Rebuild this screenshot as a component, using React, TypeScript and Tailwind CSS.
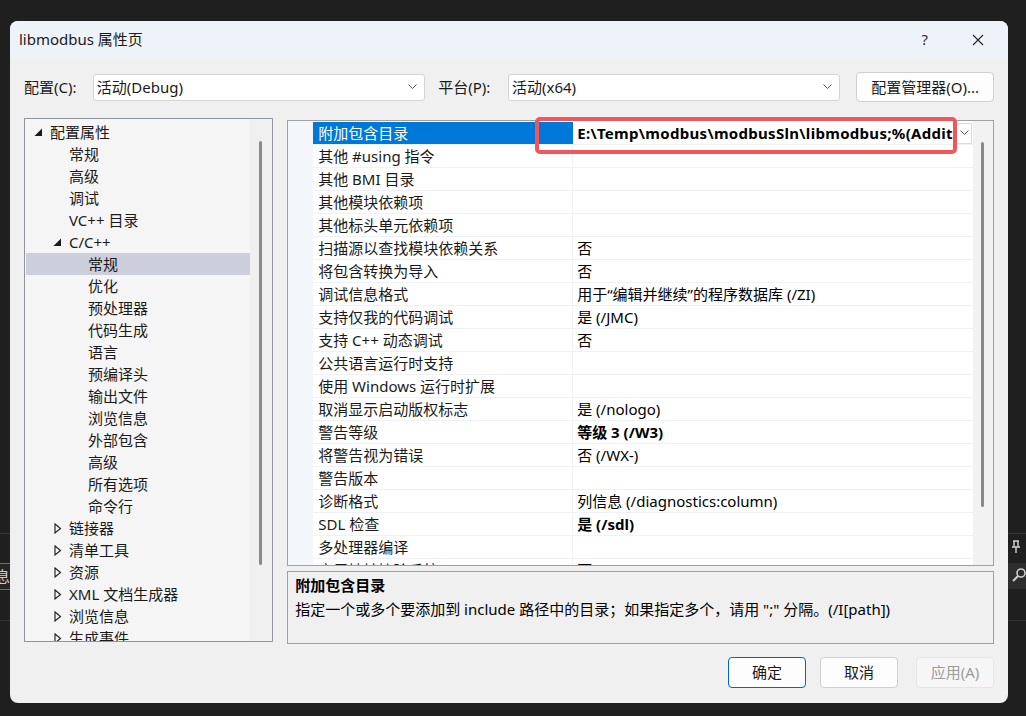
import React from "react";

type TreeItem = { label: string; level: number; arrow?: "open" | "closed"; selected?: boolean };

const tree: TreeItem[] = [
  { label: "配置属性", level: 0, arrow: "open" },
  { label: "常规", level: 1 },
  { label: "高级", level: 1 },
  { label: "调试", level: 1 },
  { label: "VC++ 目录", level: 1 },
  { label: "C/C++", level: 1, arrow: "open" },
  { label: "常规", level: 2, selected: true },
  { label: "优化", level: 2 },
  { label: "预处理器", level: 2 },
  { label: "代码生成", level: 2 },
  { label: "语言", level: 2 },
  { label: "预编译头", level: 2 },
  { label: "输出文件", level: 2 },
  { label: "浏览信息", level: 2 },
  { label: "外部包含", level: 2 },
  { label: "高级", level: 2 },
  { label: "所有选项", level: 2 },
  { label: "命令行", level: 2 },
  { label: "链接器", level: 1, arrow: "closed" },
  { label: "清单工具", level: 1, arrow: "closed" },
  { label: "资源", level: 1, arrow: "closed" },
  { label: "XML 文档生成器", level: 1, arrow: "closed" },
  { label: "浏览信息", level: 1, arrow: "closed" },
  { label: "生成事件", level: 1, arrow: "closed" },
];

const props: { name: string; value?: string; bold?: boolean }[] = [
  { name: "附加包含目录" },
  { name: "其他 #using 指令" },
  { name: "其他 BMI 目录" },
  { name: "其他模块依赖项" },
  { name: "其他标头单元依赖项" },
  { name: "扫描源以查找模块依赖关系", value: "否" },
  { name: "将包含转换为导入", value: "否" },
  { name: "调试信息格式", value: "用于“编辑并继续”的程序数据库 (/ZI)" },
  { name: "支持仅我的代码调试", value: "是 (/JMC)" },
  { name: "支持 C++ 动态调试", value: "否" },
  { name: "公共语言运行时支持" },
  { name: "使用 Windows 运行时扩展" },
  { name: "取消显示启动版权标志", value: "是 (/nologo)" },
  { name: "警告等级", value: "等级 3 (/W3)", bold: true },
  { name: "将警告视为错误", value: "否 (/WX-)" },
  { name: "警告版本" },
  { name: "诊断格式", value: "列信息 (/diagnostics:column)" },
  { name: "SDL 检查", value: "是 (/sdl)", bold: true },
  { name: "多处理器编译" },
  { name: "启用地址擦除系统", value: "否" },
];

const indent = ["pl-[9px]", "pl-[28px]", "pl-[47px]"];

function Chevron() {
  return (
    <svg width="9" height="6" viewBox="0 0 9 6" className="shrink-0">
      <polyline points="0.5,0.5 4.5,4.5 8.5,0.5" fill="none" stroke="#5a5a5a" strokeWidth="1" />
    </svg>
  );
}

function Select({ value, width }: { value: string; width: string }) {
  return (
    <div className={`${width} h-[27px] flex items-center justify-between pl-[3px] pr-[7px] bg-white border border-[#d4d4d4] rounded-[3px]`}>
      <span>{value}</span>
      <Chevron />
    </div>
  );
}

function TreeArrow({ kind }: { kind?: "open" | "closed" }) {
  if (kind === "open")
    return (
      <svg width="9" height="9" viewBox="0 0 9 9">
        <polygon points="8,0.5 8,8 0.5,8" fill="#1a1a1a" />
      </svg>
    );
  if (kind === "closed")
    return (
      <svg width="8" height="11" viewBox="0 0 8 11" className="ml-px">
        <polygon points="1,1 6.5,5.5 1,10" fill="none" stroke="#1a1a1a" strokeWidth="1.1" />
      </svg>
    );
  return null;
}

export default function App() {
  return (
    <div className="relative h-[716px] w-[1026px] overflow-hidden bg-[#1f1f1f] pt-[21px] pl-[10px] font-['Noto_Sans','Noto_Sans_CJK_SC',sans-serif] text-[15px] text-[#1a1a1a]">
      {/* IDE behind the dialog */}
      <div className="absolute left-0 top-[533px] h-px w-full bg-[#333333]" />
      <div className="absolute left-0 top-[620px] h-px w-full bg-[#333333]" />
      <div className="absolute left-[-6px] top-[563px] h-[27px] w-[30px] border-y border-[#6b5bd6] bg-[#252526] text-[#cccccc] leading-[25px]">
        <span className="pl-[1px]">息</span>
      </div>
      <div className="absolute right-0 top-[563px] h-[26px] w-[20px] bg-[#2d2d2d]" />
      <svg className="absolute right-[5px] top-[540px]" width="10" height="14" viewBox="0 0 10 14">
        <path d="M2 1h6M3 1v6M7 1v6M1 7h8M5 7v6" stroke="#d0d0d0" strokeWidth="1.4" fill="none" />
      </svg>
      <svg className="absolute right-0 top-[567px]" width="14" height="16" viewBox="0 0 14 16">
        <circle cx="9" cy="6" r="4" stroke="#d0d0d0" strokeWidth="1.6" fill="none" />
        <path d="M6 9L1 14" stroke="#d0d0d0" strokeWidth="2" />
      </svg>

      <div className="relative flex h-[682px] w-[998px] flex-col overflow-hidden rounded-[8px] bg-[#f0f0f0]">
        {/* title bar */}
        <div className="flex h-[37px] shrink-0 items-center bg-[#eef2f9] pl-[9px]">
          <span className="text-[#1a1a1a]">libmodbus 属性页</span>
          <span className="ml-auto mr-[44px] text-[#333]">?</span>
          <svg width="12" height="12" viewBox="0 0 12 12" className="mr-[24px]">
            <path d="M1 1L11 11M11 1L1 11" stroke="#222" strokeWidth="1.1" />
          </svg>
        </div>

        <div className="flex flex-col px-[14px]">
          {/* configuration row */}
          <div className="mt-[14px] flex h-[30px] items-center">
            <span className="w-[69px]">配置(C):</span>
            <Select value="活动(Debug)" width="w-[333px]" />
            <span className="ml-[13px] w-[70px]">平台(P):</span>
            <Select value="活动(x64)" width="w-[333px]" />
            <div className="ml-[16px] flex h-[30px] w-[138px] items-center justify-center rounded-[4px] border border-[#d0d0d0] bg-[#fdfdfd]">
              配置管理器(O)...
            </div>
          </div>

          <div className="mt-[16px] flex gap-[14px]">
            {/* tree */}
            <div className="flex h-[524px] w-[250px] border border-[#8e959e] bg-[#f5f5f5]">
              <div className="flex flex-1 flex-col overflow-hidden pt-[2px]">
                {tree.map((t, i) => (
                  <div
                    key={i}
                    className={`flex h-[22px] shrink-0 items-center ${indent[t.level]} ${t.selected ? "ml-px bg-[#cccedb]" : ""}`}
                  >
                    <div className={`flex w-[16px] items-center ${t.selected ? "-ml-px" : ""}`}>
                      <TreeArrow kind={t.arrow} />
                    </div>
                    <span className="whitespace-nowrap">{t.label}</span>
                  </div>
                ))}
              </div>
              <div className="w-[22px] bg-[#f0f0f0] pt-[22px] pl-[9px]">
                <div className="h-[424px] w-[3px] rounded-full bg-[#8a8a8a]" />
              </div>
            </div>

            {/* grid + description */}
            <div className="mt-[2px] flex w-[709px] flex-col">
              <div className="relative flex h-[446px] border border-[#a0a0a0] bg-white">
                <div className="w-[25px] bg-[#f3f6fb]" />
                <div className="flex w-[660px] flex-col overflow-hidden pt-[1px]">
                  {props.map((p, i) => (
                    <div key={i} className="flex h-[23px] shrink-0 border-b border-[#eef2f8]">
                      <div
                        className={`flex w-[260px] shrink-0 items-center pl-[5px] whitespace-nowrap ${
                          i === 0 ? "bg-[#0078d7] text-white" : "border-r border-[#eef2f8]"
                        }`}
                      >
                        {p.name}
                      </div>
                      {i === 0 ? (
                        <div className="flex w-[400px] items-center pl-[4px]">
                          <span className="w-[379px] overflow-hidden whitespace-nowrap font-bold tracking-[0.3px] text-black">
                            {"E:\\Temp\\modbus\\modbusSln\\libmodbus;%(AdditionalIncludeDirectories)"}
                          </span>
                          <div className="flex h-[21px] w-[16px] items-center justify-center border border-[#dcdcdc] bg-white">
                            <Chevron />
                          </div>
                        </div>
                      ) : (
                        <div className={`flex w-[400px] items-center pl-[4px] whitespace-nowrap text-black ${p.bold ? "font-bold" : ""}`}>
                          {p.value}
                        </div>
                      )}
                    </div>
                  ))}
                </div>
                <div className="flex-1 bg-[#f2f2f2] pt-[21px] pl-[8px]">
                  <div className="h-[365px] w-[3px] rounded-full bg-[#8a8a8a]" />
                </div>
                {/* highlight annotation */}
                <div className="absolute left-[247px] top-[-4px] h-[37px] w-[422px] rounded-[5px] border-[4px] border-[#f0565b]" />
              </div>

              <div className="mt-[5px] h-[73px] border border-[#a0a0a0] bg-[#f0f0f0] px-[7px] pt-[1px] leading-[24px]">
                <div className="font-bold text-black">附加包含目录</div>
                <div className="text-black">指定一个或多个要添加到 include 路径中的目录；如果指定多个，请用 ";" 分隔。(/I[path])</div>
              </div>
            </div>
          </div>

          {/* buttons */}
          <div className="mt-[13px] flex justify-end">
            <div className="flex h-[31px] w-[78px] items-center justify-center rounded-[4px] border border-[#0067c0] bg-[#fdfdfd]">确定</div>
            <div className="ml-[14px] flex h-[31px] w-[78px] items-center justify-center rounded-[4px] border border-[#d0d0d0] bg-[#fdfdfd]">取消</div>
            <div className="ml-[18px] flex h-[31px] w-[78px] items-center justify-center rounded-[4px] border border-[#e6e6e6] bg-[#f6f6f6] text-[#9c9c9c]">应用(A)</div>
          </div>
        </div>
      </div>
    </div>
  );
}
